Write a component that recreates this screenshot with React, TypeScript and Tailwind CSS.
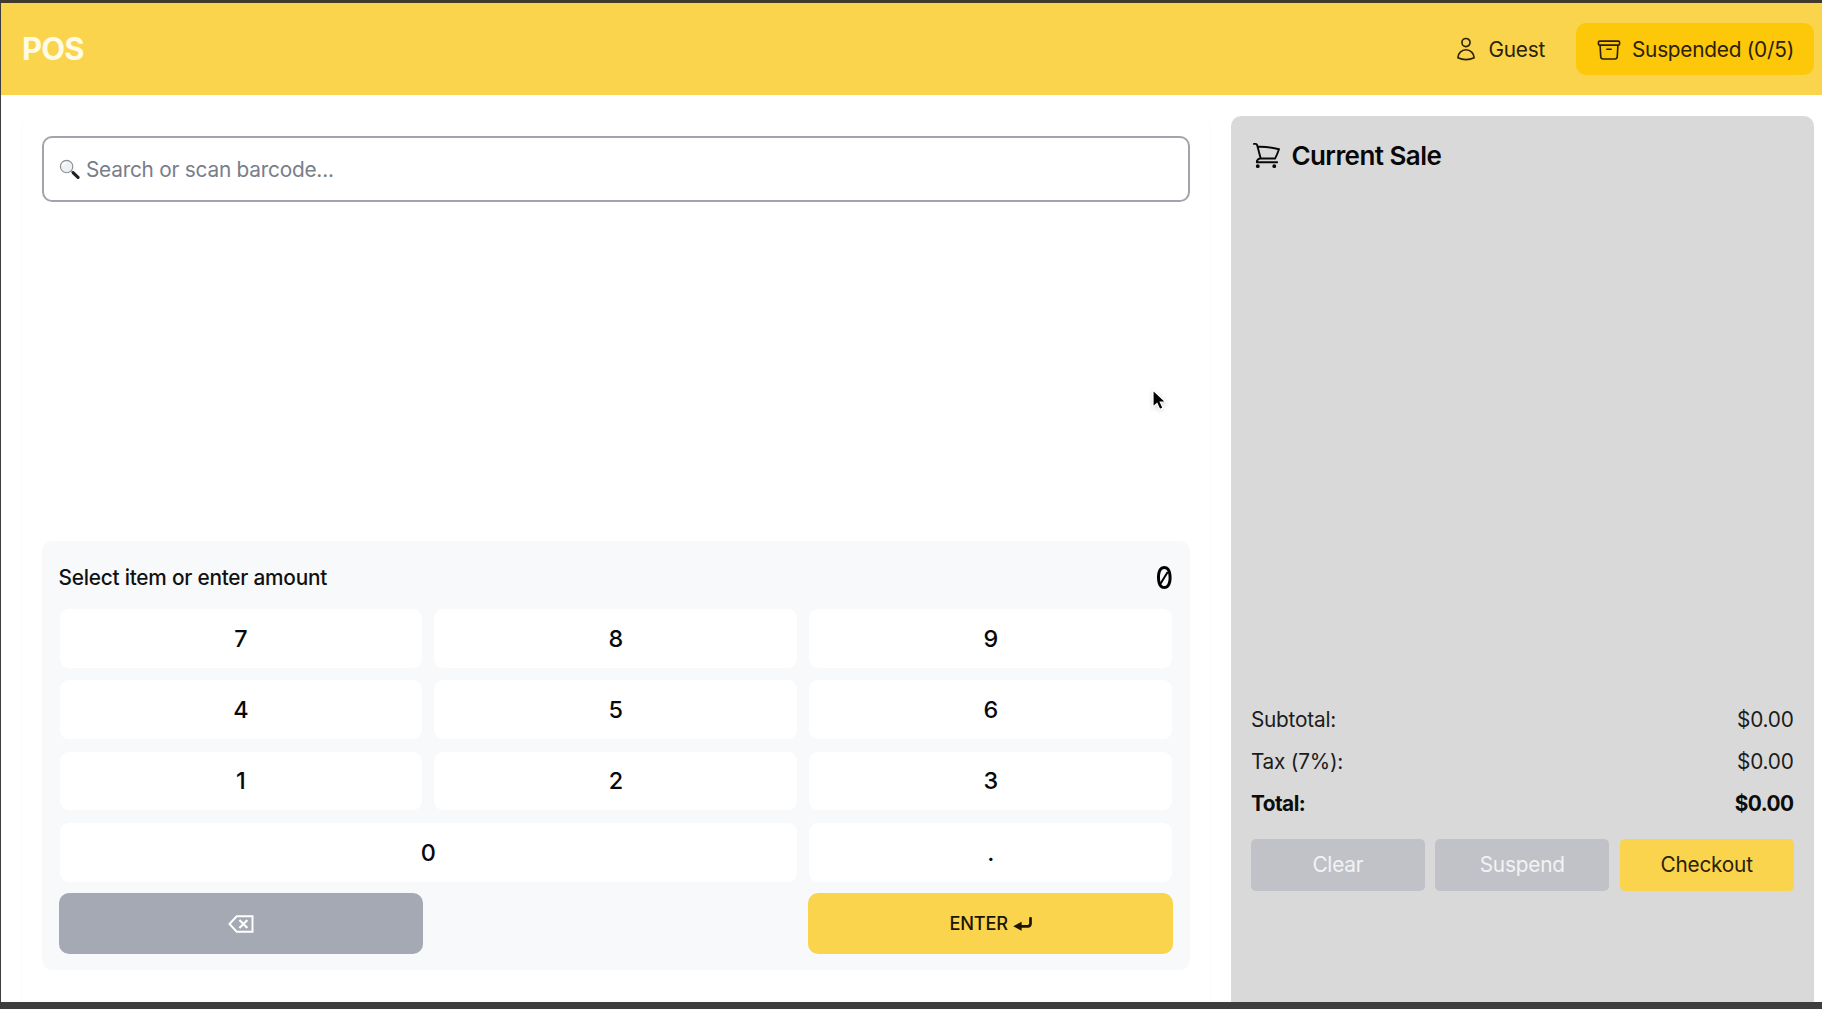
import { HiOutlineArchiveBox, HiOutlineShoppingCart, HiOutlineUser } from "react-icons/hi2";

const keys = ["7", "8", "9", "4", "5", "6", "1", "2", "3", "0", "."];

function SearchGlyph() {
  return (
    <svg className="h-[21px] w-[21px] shrink-0" viewBox="0 0 21 21" fill="none">
      <path d="M12.5 12.2 15 14.4" stroke="#777" strokeWidth="1.8" />
      <path d="m14.3 13.8 4.7 4.6" stroke="#222" strokeWidth="3.2" strokeLinecap="round" />
      <circle cx="7.6" cy="7.6" r="6.2" fill="#eef1f3" stroke="#8c8f92" strokeWidth="1.1" />
      <path d="M4 7.2a3.8 3.8 0 0 1 3.2-3.5" stroke="#fff" strokeWidth="1.2" />
    </svg>
  );
}

function BackspaceGlyph() {
  return (
    <svg className="h-[18px] w-[26px]" viewBox="0 0 26 18" fill="none" stroke="white" strokeWidth="1.9">
      <path d="M1.5 9 8.7 1.3h15.8v15.4H8.7Z" />
      <path d="m11.4 4.9 8 8.2m0-8.2-8 8.2" strokeWidth="2.2" />
    </svg>
  );
}

function EnterGlyph() {
  return (
    <svg className="h-[14px] w-[19px]" viewBox="0 0 19 14" fill="none">
      <path d="M17.5 1.2v5.3q0 2.8-2.8 2.8H6" stroke="#1c1503" strokeWidth="2.7" strokeLinecap="round" />
      <path d="M.2 9.3 8.6 4.8v9Z" fill="#1c1503" />
    </svg>
  );
}

function Row({ label, value, bold }: { label: string; value: string; bold?: boolean }) {
  return (
    <div
      className={
        bold
          ? "flex justify-between font-bold tracking-[-0.5px] text-[#0c0c0c]"
          : "flex justify-between text-[#1c1c1c]"
      }
    >
      <span>{label}</span>
      <span>{value}</span>
    </div>
  );
}

export default function App() {
  return (
    <div className="relative flex h-[1009px] w-[1822px] flex-col overflow-hidden border-t-[3px] border-b-[7px] border-l border-t-[#3f3a2c] border-b-[#3e3e3e] border-l-[#3e3e3e] bg-white font-['Inter',sans-serif] text-[20.8px] leading-[31px] tracking-[-0.22px]">
      <header className="flex h-[92px] shrink-0 items-center justify-between bg-[#fad44c] pr-2 pl-[21px]">
        <h1 className="pb-px text-[31px] font-bold tracking-[-0.9px] text-[#fffbe4]">POS</h1>
        <div className="flex items-center text-[#2b2107]">
          <div className="mr-[31px] flex items-center gap-[9.5px]">
            <HiOutlineUser className="h-[26px] w-[26px]" />
            <span>Guest</span>
          </div>
          <button className="flex h-[52px] w-[238px] items-center justify-center gap-[10px] rounded-[10px] bg-[#fdc70a] tracking-[-0.24px]">
            <HiOutlineArchiveBox className="mt-px h-[26px] w-[26px]" />
            <span>Suspended (0/5)</span>
          </button>
        </div>
      </header>

      <main className="flex min-h-0 flex-1 gap-[19.5px] pt-[21px] pr-2 pl-[20px]">
        <section className="flex w-[1190px] flex-col justify-between rounded-t-[10px] border-x border-[#fbfcfc] px-[20px] pt-[20px] pb-[32px]">
          <div className="flex h-[66px] items-center gap-[6px] rounded-[10px] border-2 border-[#a0a5ab] pl-[15px] text-[#787e89]">
            <SearchGlyph />
            <span>Search or scan barcode...</span>
          </div>

          <div className="h-[429px] rounded-[10px] bg-[#f8f9fb] pt-[16px] pr-[17px] pl-[16.5px]">
            <div className="flex h-[51px] items-start justify-between pt-[5px]">
              <span className="font-medium text-[#111]">Select item or enter amount</span>
              <span className="relative text-[31px] font-medium tracking-normal">
                <span className="inline-block origin-right scale-x-[0.88]">0</span>
                <span className="absolute top-[9px] right-[8px] h-[14px] w-[2px] rotate-[32deg] bg-black" />
              </span>
            </div>
            <div className="grid grid-cols-3 gap-x-[10.4px] gap-y-[10.5px]">
              {keys.map((key) => (
                <button
                  key={key}
                  className={
                    key === "0"
                      ? "col-span-2 h-[60.8px] rounded-[10px] border border-[#f8f9fb] bg-white text-[23.4px] font-medium text-[#090909]"
                      : "h-[60.8px] rounded-[10px] border border-[#f8f9fb] bg-white text-[23.4px] font-medium text-[#090909]"
                  }
                >
                  {key}
                </button>
              ))}
              <button className="flex h-[61px] items-center justify-center rounded-[10px] bg-[#a5a9b3]">
                <BackspaceGlyph />
              </button>
              <button className="col-start-3 flex h-[61px] items-center justify-center gap-[5px] rounded-[10px] bg-[#fad44c] text-[18.2px] font-medium text-[#1c1503]">
                ENTER
                <EnterGlyph />
              </button>
            </div>
          </div>
        </section>

        <aside className="flex flex-1 flex-col rounded-t-[10px] bg-[#d9d9d9] px-[20.4px] pt-[24px]">
          <h2 className="flex items-center gap-[9.5px] text-[26px] font-semibold tracking-[-0.55px] text-[#080808]">
            <HiOutlineShoppingCart className="h-[31px] w-[31px]" />
            Current Sale
          </h2>
          <div className="mt-[533px] flex flex-col gap-[10.8px]">
            <Row label="Subtotal:" value="$0.00" />
            <Row label="Tax (7%):" value="$0.00" />
            <Row label="Total:" value="$0.00" bold />
          </div>
          <div className="mt-[20.4px] grid grid-cols-3 gap-[10.4px]">
            <button className="h-[52px] rounded-[5px] bg-[#c0c2c7] text-[#f2f3f5]">Clear</button>
            <button className="h-[52px] rounded-[5px] bg-[#c0c2c7] text-[#f2f3f5]">Suspend</button>
            <button className="h-[52px] rounded-[5px] bg-[#fad44c] text-[#2b2107]">Checkout</button>
          </div>
        </aside>
      </main>

      <svg className="absolute top-[386px] left-[1151px] h-[24px] w-[16px] drop-shadow-sm" viewBox="0 0 16 24">
        <path d="M1 1v17l4-3.6 2.8 6 3.2-1.4-2.7-5.8H14Z" fill="#000" stroke="#fff" strokeWidth="1.2" />
      </svg>
    </div>
  );
}
